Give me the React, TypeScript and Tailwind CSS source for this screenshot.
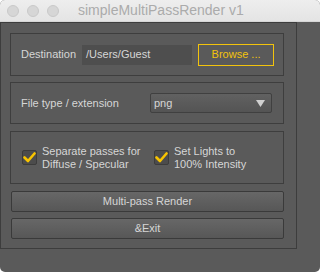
import React from 'react';

const font = { fontFamily: '"Liberation Sans", Arial, sans-serif' };

const Check: React.FC<{ label: [string, string] }> = ({ label }) => (
  <div className="flex items-center gap-[5px]">
    <div className="w-[15px] h-[15px] rounded-[2px] border border-[#3c3c3c] bg-[#4c4c4c] flex items-center justify-center">
      <svg width="13" height="11" viewBox="0 0 13 11">
        <path d="M1.5 5.5 L5 9 L11.5 1.5" fill="none" stroke="#f7c300" strokeWidth="2.6" strokeLinecap="round" strokeLinejoin="round" />
      </svg>
    </div>
    <div className="text-[11px] leading-[13px] text-[#d6d6d6]">
      <div>{label[0]}</div>
      <div>{label[1]}</div>
    </div>
  </div>
);

const Btn: React.FC<{ children: React.ReactNode }> = ({ children }) => (
  <div className="h-[21px] w-[273px] ml-px border border-[#3a3a3a] rounded-[2px] bg-gradient-to-b from-[#676767] to-[#575757] flex items-center justify-center text-[11px] text-[#d6d6d6]">
    {children}
  </div>
);

export default function App() {
  return (
    <div className="w-[320px] h-[272px] bg-white" style={font}>
      <div className="w-[320px] h-[272px] rounded-[5px] overflow-hidden flex flex-col bg-[#5a5a5a]">
        <div className="h-[22px] bg-gradient-to-b from-[#eeeeee] to-[#e4e4e4] flex items-center border-b border-[#d6d6d6]">
          <div className="flex gap-[8px] pl-[7px]">
            <div className="w-[12px] h-[12px] rounded-full bg-[#d6d6d6] border border-[#c8c8c8]" />
            <div className="w-[12px] h-[12px] rounded-full bg-[#d6d6d6] border border-[#c8c8c8]" />
            <div className="w-[12px] h-[12px] rounded-full bg-[#d6d6d6] border border-[#c8c8c8]" />
          </div>
          <div className="ml-[19px] text-[14px] text-[#ababab]">simpleMultiPassRender v1</div>
        </div>
        <div className="w-[297px] h-[227px] border border-[#3d3d3d] pt-[10px] pl-[9px]">
          <div className="w-[274px] h-[43px] border border-[#3e3e3e] flex items-center pl-[10px]">
            <span className="text-[11px] text-[#d6d6d6]">Destination</span>
            <div className="ml-[6px] w-[110px] h-[20px] bg-[#4e4e4e] flex items-center pl-[4px] text-[11px] text-[#d6d6d6]">/Users/Guest</div>
            <div className="ml-[6px] w-[76px] h-[22px] border border-[#f2c30c] flex items-center justify-center text-[11px] text-[#f2c30c]">Browse ...</div>
          </div>
          <div className="mt-[6px] w-[274px] h-[42px] border border-[#3e3e3e] flex items-center pl-[10px]">
            <span className="text-[11px] text-[#d6d6d6] w-[129px]">File type / extension</span>
            <div className="w-[122px] h-[20px] border border-[#404040] rounded-[2px] bg-gradient-to-b from-[#616161] to-[#545454] flex items-center justify-between pl-[3px] pr-[6px] text-[11px] text-[#d6d6d6]">
              <span>png</span>
              <svg width="9" height="7" viewBox="0 0 9 7"><path d="M0 0 H9 L4.5 7 Z" fill="#d0d0d0" /></svg>
            </div>
          </div>
          <div className="mt-[7px] w-[274px] h-[53px] border border-[#3e3e3e] flex items-center pl-[11px]">
            <div className="w-[132px]"><Check label={['Separate passes for', 'Diffuse / Specular']} /></div>
            <Check label={['Set Lights to', '100% Intensity']} />
          </div>
          <div className="mt-[7px]"><Btn>Multi-pass Render</Btn></div>
          <div className="mt-[6px]"><Btn>&amp;Exit</Btn></div>
        </div>
      </div>
    </div>
  );
}
